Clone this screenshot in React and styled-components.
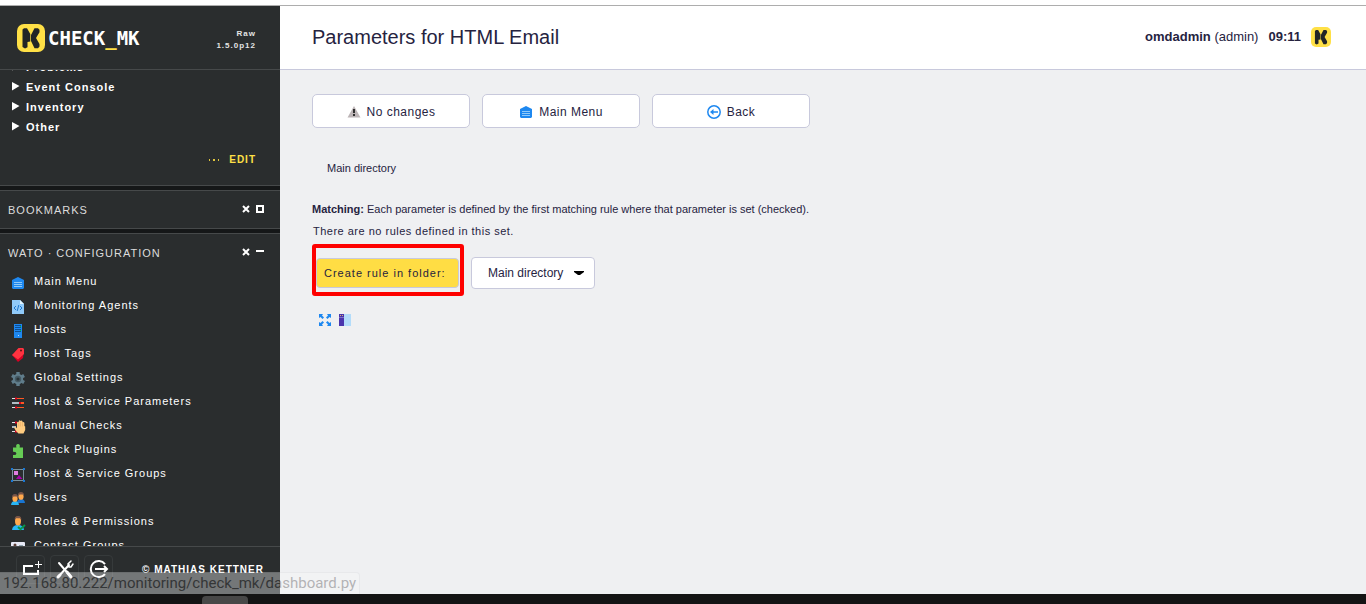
import React from "react";
import styled, { createGlobalStyle } from "styled-components";

const GlobalStyle = createGlobalStyle`
  *, *::before, *::after { box-sizing: border-box; }
  body {
    margin: 0;
    font-family: "Liberation Sans", Arial, sans-serif;
    font-size: 11px;
    line-height: 16px;
    color: #26233f;
  }
  h1, h2, p, ul { margin: 0; padding: 0; font-weight: normal; }
  button, select { font: inherit; color: inherit; margin: 0; }
  a { color: inherit; text-decoration: none; }
  svg { display: block; flex: none; }
`;

const Screen = styled.div`
  display: flex;
  flex-direction: column;
  height: 100vh;
  background: #eff0f2;
`;

const WindowEdge = styled.div`
  flex: none;
  height: 6px;
  background: #fff;
  border-bottom: 1px solid #adadad;
`;

const Workspace = styled.div`
  display: flex;
  flex: 1;
  min-height: 0;
  position: relative;
`;

const Sidebar = styled.aside`
  display: flex;
  flex-direction: column;
  flex: none;
  width: 280px;
  background: #2a2d2e;
  color: #fff;
  letter-spacing: 1px;
`;

const SideHeader = styled.div`
  display: flex;
  align-items: center;
  justify-content: space-between;
  flex: none;
  height: 64px;
  padding: 0 24px 0 17px;
  border-bottom: 1px solid #46494a;
`;

const Brand = styled.a`
  display: flex;
  align-items: center;
  gap: 3px;
  font: bold 19px/28px "DejaVu Sans Mono", monospace;
  letter-spacing: normal;
`;

const Accent = styled.span`
  color: #ffe046;
`;

const Version = styled.div`
  font-size: 8px;
  font-weight: bold;
  line-height: 12px;
  text-align: right;
  padding-top: 4px;
  color: #e4e4e4;
`;

const SideScroll = styled.div`
  flex: 1;
  min-height: 0;
  overflow: hidden;
  background: #151718;
`;

const Snapin = styled.section`
  background: #2a2d2e;
  border-bottom: 1px solid #46494a;
  & + & {
    margin-top: 4px;
    border-top: 1px solid #46494a;
  }
`;

const TreeList = styled.ul`
  list-style: none;
  margin-top: -13px;
  padding-left: 11px;
`;

const TreeItem = styled.li`
  display: flex;
  align-items: center;
  gap: 6px;
  height: 20px;
  font-weight: bold;
`;

const EditRow = styled.div`
  display: flex;
  justify-content: flex-end;
  padding: 15px 24px 17px 0;
`;

const EditLink = styled.a`
  display: flex;
  align-items: center;
  gap: 8px;
  font-size: 10px;
  font-weight: bold;
  color: #ffe046;
`;

const SnapinHead = styled.div`
  display: flex;
  align-items: center;
  justify-content: space-between;
  height: 37px;
  padding: 0 16px 0 8px;
  color: #dcdcdc;
`;

const SnapinTitle = styled.h2`
  font-size: 11px;
`;

const SnapinTools = styled.div`
  display: flex;
  gap: 6px;
  padding-bottom: 2px;
`;

const ToolButton = styled.button`
  padding: 0;
  border: 0;
  background: none;
`;

const MenuList = styled.ul`
  list-style: none;
  padding-left: 10px;
  margin-top: -2px;
`;

const MenuItem = styled.li`
  display: flex;
  align-items: center;
  gap: 8px;
  height: 24px;
  svg { margin-top: 4px; }
`;

const SideFooter = styled.div`
  display: flex;
  align-items: flex-start;
  gap: 5px;
  flex: none;
  height: 48px;
  padding: 8px 16px 0 16px;
  border-top: 1px solid #46494a;
`;

const FootButton = styled.button`
  display: grid;
  place-items: center;
  width: 29px;
  height: 29px;
  padding: 0;
  border: 1px solid #363a3b;
  border-radius: 4px;
  background: none;
`;

const Copyright = styled.a`
  margin-left: auto;
  padding-top: 7px;
  font-size: 10px;
  font-weight: bold;
`;

const Page = styled.div`
  flex: 1;
  min-width: 0;
`;

const PageHeader = styled.header`
  display: flex;
  align-items: center;
  justify-content: space-between;
  height: 64px;
  padding: 0 35px 2px 32px;
  background: #fff;
  border-bottom: 1px solid #c8c9dc;
`;

const Title = styled.h1`
  font-size: 20px;
  line-height: 24px;
`;

const UserInfo = styled.div`
  display: flex;
  align-items: center;
  gap: 10px;
  font-size: 13px;
`;

const Content = styled.main`
  padding: 24px 32px;
`;

const Toolbar = styled.nav`
  display: flex;
  gap: 12px;
`;

const ContextButton = styled.button`
  display: flex;
  align-items: center;
  justify-content: center;
  gap: 6px;
  width: 158px;
  height: 34px;
  padding: 2px 0 0;
  border: 1px solid #c8c9dc;
  border-radius: 5px;
  background: #fff;
  font-size: 12px;
  letter-spacing: 0.04em;
`;

const Crumb = styled.p`
  margin-top: 32px;
  padding-left: 15px;
`;

const Explanation = styled.p`
  margin-top: 25px;
`;

const EmptyNote = styled.p`
  margin-top: 6px;
  padding-left: 1px;
  letter-spacing: 0.045em;
`;

const CreateForm = styled.form`
  display: flex;
  align-items: flex-start;
  gap: 7px;
  margin-top: 5px;
`;

const Highlight = styled.div`
  padding: 10px 1px 4px 0;
  border: 4px solid #fe0000;
  border-radius: 3px;
`;

const CreateButton = styled.button`
  display: block;
  width: 143px;
  height: 30px;
  padding: 0 7px;
  border: 1px solid #c8c9dc;
  border-radius: 4px;
  background: #ffdd44;
  text-align: left;
  letter-spacing: 1px;
`;

const SelectBox = styled.div`
  display: grid;
  align-items: center;
  width: 124px;
  margin-top: 13px;
  & > * { grid-area: 1 / 1; }
  svg { justify-self: end; margin-right: 10px; pointer-events: none; }
`;

const FolderSelect = styled.select`
  appearance: none;
  width: 100%;
  height: 32px;
  padding: 0 16px;
  border: 1px solid #c8c9dc;
  border-radius: 4px;
  background: #fff;
  font-size: 12px;
`;

const PageTools = styled.div`
  display: flex;
  gap: 8px;
  margin-top: 18px;
  padding-left: 7px;
`;

const LinkPreview = styled.div`
  position: absolute;
  left: 0;
  bottom: 0;
  height: 22px;
  padding: 0 3px;
  border: 1px solid #dcdee0;
  border-left: 0;
  border-bottom: 0;
  border-radius: 0 4px 0 0;
  background: #f8f9fa;
  color: #484848;
  font: 15px/20px Roboto, sans-serif;
  opacity: 0.36;
`;

const Dock = styled.div`
  flex: none;
  height: 10px;
  padding: 2px 0 0 202px;
  background: #141414;
`;

const DockTab = styled.div`
  width: 46px;
  height: 8px;
  border-radius: 4px 4px 0 0;
  background: #484848;
`;

const Mark = ({ size }) => (
  <svg width={size} height={size} viewBox="0 0 28 28" aria-hidden="true">
    <rect width="28" height="28" rx="7" fill="#ffe046" />
    <path
      fill="#222526"
      d="M5.500 5.500L7 4.200h3L13.300 10v7.500L10.500 18v5.200L8 24.500l-2.500-1.500z"
    />
    <path
      fill="#222526"
      d="M17.500 4.200h3.500l1.500 1.500v2.500L19 14l3.500 6v2.500L21 24.200h-3.500L14 17v-6z"
    />
  </svg>
);

const Home = ({ size = 16 }) => (
  <svg width={size} height={size} viewBox={size === 16 ? "0 0 16 16" : "1 1 14 14"} aria-hidden="true">
    <path fill="#1e88f0" d="M8 2l6 3v8l-1 1H3l-1-1V5z" />
    <path stroke="#90caf9" d="M4 7.5h8M4 9.5h8M4 11.5h8" />
  </svg>
);

const Person = ({ x, y, shirt }) => (
  <g transform={`translate(${x} ${y})`}>
    <path fill={shirt} d="M-4 8q.4-4 4-4t4 4z" />
    <ellipse cy="1.400" rx="2.600" ry="3.400" fill="#ffa94d" />
    <path fill="#795548" d="M-3 1q-.3-4 3-4t3 4L1.600-.600h-3z" />
  </g>
);

const art = {
  agents: (
    <>
      <path fill="#90caf9" d="M2 1h8l4 4v10H2z" />
      <path fill="#e1f5fe" d="M10 1l4 4h-4z" />
      <path fill="none" stroke="#1e78d0" d="M6 7L4 9l2 2M10 7l2 2-2 2M8.800 6l-1.600 6" />
    </>
  ),
  hosts: (
    <>
      <path fill="#1e88f0" d="M4 1h8v14H4z" />
      <path stroke="#0d4f96" d="M5 2.500h6M5 4.500h6M5 6.500h6M5 8.500h6" />
      <path fill="#00c853" d="M10 3h1v1h-1zM10 7h1v1h-1z" />
      <path fill="#bbdefb" d="M8 12h1v1H8z" />
    </>
  ),
  tags: (
    <>
      <path fill="#d50024" d="M2 8l6 7 5-4 1-8z" />
      <path fill="#ff3340" d="M8.500 1H13l1 1v5l-6 5.500L2 8z" />
      <circle cx="11" cy="3.500" r="1" fill="#5a1515" />
    </>
  ),
  gear: (
    <>
      <path stroke="#607d8b" strokeWidth="3.400" d="M8 1v14M1.900 4.500l12.200 7M1.900 11.500l12.200-7" />
      <circle cx="8" cy="8" r="5.200" fill="#607d8b" />
      <circle cx="8" cy="8" r="3.200" fill="#455a64" />
      <circle cx="8" cy="8" r="1.600" fill="#2a3438" />
    </>
  ),
  params: (
    <>
      <path stroke="#ff5722" d="M2 3.500h12M2 12.500h12" />
      <path stroke="#e0e0e0" d="M2 3.500h3M2 12.500h3" />
      <path stroke="#b0bec5" strokeWidth="2" d="M2 8h8" />
      <path stroke="#ff5722" strokeWidth="2" d="M11 8h3" />
      <path stroke="#e00020" strokeWidth="2" d="M5 3.500h2M9 8h2M5 12.500h2" />
    </>
  ),
  manual: (
    <>
      <path stroke="#e0e0e0" d="M2 3.500h3M2 12.500h3" />
      <path stroke="#b0bec5" strokeWidth="2" d="M2 8h4" />
      <path stroke="#e00020" strokeWidth="2" d="M5 3.500h2M5 12.500h2" />
      <path
        fill="#ffcc80"
        d="M7 8V3.500q.8-1.500 1.700-.3V2q1-1.400 1.900 0 1-1.300 1.900.3v1q1-.9 1.900.4V7l.8.5V11l-1.700 3.500H8.500L6 12 4 8.500q1.200-1.500 3 .8z"
      />
      <path stroke="#e8a45c" strokeWidth=".5" d="M8.700 3.500v4M10.600 3v4.500M12.500 3.500v4" />
    </>
  ),
  plugin: (
    <path
      fill="#66cc55"
      d="M3 4.500h3.400Q5.400 1 8 1t1.600 3.500H13V15H3v-3q3.400.4 3.400-1.600T3 8.700z"
    />
  ),
  groups: (
    <>
      <path fill="none" stroke="#78909c" d="M2.500 2.500h11v11h-11z" />
      <path fill="#1976d2" d="M1 1h2v2H1zM13 1h2v2h-2zM1 13h2v2H1zM13 13h2v2h-2z" />
      <path fill="#e07ee0" d="M4 4h4v4H4z" />
      <path fill="#aa00aa" d="M6 12l3-4 3.500 4z" />
    </>
  ),
  users: (
    <>
      <Person x={11} y={4} shirt="#1976d2" />
      <Person x={5} y={6} shirt="#29b6f6" />
    </>
  ),
  roles: (
    <>
      <path fill="#29b6f6" d="M2 15q.5-5 6-5t6 5z" />
      <ellipse cx="8" cy="6" rx="3" ry="4.500" fill="#ffa94d" />
      <path fill="#795548" d="M4.700 5q-.4-4 3.300-4t3.300 4L10 3.200H6z" />
      <path fill="none" stroke="#0a9648" strokeWidth="2" d="M8 12l2.500 2.200L15 10" />
    </>
  ),
  contact: (
    <>
      <rect x="1" y="3" width="14" height="11" rx="1" fill="#e8eaf6" />
      <circle cx="5" cy="6" r="1.500" fill="#5d4037" />
      <path stroke="#90a4ae" d="M9 6.500h4M9 9.500h4" />
    </>
  ),
};

const Icon = ({ name }) =>
  name === "home" ? (
    <Home />
  ) : (
    <svg width="16" height="16" viewBox="0 0 16 16" aria-hidden="true">{art[name]}</svg>
  );

const views = ["Problems", "Event Console", "Inventory", "Other"];

const menu = [
  ["home", "Main Menu"],
  ["agents", "Monitoring Agents"],
  ["hosts", "Hosts"],
  ["tags", "Host Tags"],
  ["gear", "Global Settings"],
  ["params", "Host & Service Parameters"],
  ["manual", "Manual Checks"],
  ["plugin", "Check Plugins"],
  ["groups", "Host & Service Groups"],
  ["users", "Users"],
  ["roles", "Roles & Permissions"],
  ["contact", "Contact Groups"],
];

const SnapinBar = ({ title, open }) => (
  <SnapinHead>
    <SnapinTitle>{title}</SnapinTitle>
    <SnapinTools>
      <ToolButton aria-label="Close">
        <svg width="8" height="8" viewBox="0 0 8 8">
          <path stroke="#fff" strokeWidth="2" d="M1 1l6 6M7 1L1 7" />
        </svg>
      </ToolButton>
      <ToolButton aria-label={open ? "Collapse" : "Expand"}>
        <svg width="8" height="8" viewBox="0 0 8 8">
          {open ? (
            <path fill="#fff" d="M0 2h8v2H0z" />
          ) : (
            <path fill="none" stroke="#fff" strokeWidth="2" d="M1 1h6v6H1z" />
          )}
        </svg>
      </ToolButton>
    </SnapinTools>
  </SnapinHead>
);

export default function App() {
  return (
    <Screen>
      <GlobalStyle />
      <WindowEdge />
      <Workspace>
        <Sidebar>
          <SideHeader>
            <Brand href="#">
              <Mark size={28} />
              <span>CHECK<Accent>_</Accent>MK</span>
            </Brand>
            <Version>Raw<br />1.5.0p12</Version>
          </SideHeader>
          <SideScroll>
            <Snapin>
              <TreeList>
                {views.map((label) => (
                  <TreeItem key={label}>
                    <svg width="9" height="12" viewBox="0 0 9 12" aria-hidden="true">
                      <path fill="#fff" d="M1 1l7.500 4L1 9.500z" />
                    </svg>
                    {label}
                  </TreeItem>
                ))}
              </TreeList>
              <EditRow>
                <EditLink href="#">
                  <svg width="13" height="2" viewBox="0 0 13 2" aria-hidden="true">
                    <path fill="#e0c63e" d="M1 0h1v2H1zM5 0h2v2H5zM10 0h1v2h-1z" />
                  </svg>
                  EDIT
                </EditLink>
              </EditRow>
            </Snapin>
            <Snapin>
              <SnapinBar title="BOOKMARKS" />
            </Snapin>
            <Snapin>
              <SnapinBar title="WATO · CONFIGURATION" open />
              <MenuList>
                {menu.map(([icon, label]) => (
                  <MenuItem key={label}>
                    <Icon name={icon} />
                    <a href="#">{label}</a>
                  </MenuItem>
                ))}
              </MenuList>
            </Snapin>
          </SideScroll>
          <SideFooter>
            <FootButton aria-label="Add snapin">
              <svg width="23" height="23" viewBox="0 0 23 23" fill="none" stroke="#fff">
                <path strokeWidth="2" d="M14 8H5v8h14v-4" />
                <path d="M19.500 3v7M16 6.500h7" />
              </svg>
            </FootButton>
            <FootButton aria-label="Edit profile">
              <svg width="23" height="23" viewBox="0 0 23 23" fill="none" stroke="#fff" strokeLinecap="round">
                <path strokeWidth="2" d="M6 5l12 14M5 19L16 7" />
                <path strokeWidth="3" d="M14 14l4 5M5 19l2-2" />
                <path strokeWidth="1.500" d="M18 3l-3 3 1 3h2l2-3" />
              </svg>
            </FootButton>
            <FootButton aria-label="Log out">
              <svg width="23" height="23" viewBox="0 0 23 23" fill="none" stroke="#fff">
                <path strokeWidth="2" d="M18 6a8 8 0 1 0 0 10M8 11h12" />
                <path strokeWidth="2" d="M17 8l3 3-3 3" />
              </svg>
            </FootButton>
            <Copyright href="#">© MATHIAS KETTNER</Copyright>
          </SideFooter>
        </Sidebar>
        <Page>
          <PageHeader>
            <Title>Parameters for HTML Email</Title>
            <UserInfo>
              <span><b>omdadmin</b> (admin)</span>
              <b>09:11</b>
              <Mark size={20} />
            </UserInfo>
          </PageHeader>
          <Content>
            <Toolbar>
              <ContextButton>
                <svg width="14" height="14" viewBox="0 0 14 14" aria-hidden="true">
                  <path fill="#bcb4b6" d="M7 1l6.500 11.500H.5z" />
                  <path stroke="#2f2f2f" strokeWidth="2" d="M7 4v4M7 9v2" />
                </svg>
                No changes
              </ContextButton>
              <ContextButton>
                <Home size={14} />
                Main Menu
              </ContextButton>
              <ContextButton>
                <svg width="14" height="14" viewBox="0 0 14 14" fill="none" stroke="#1e88f0" aria-hidden="true">
                  <circle cx="7" cy="7" r="6.200" strokeWidth="1.500" />
                  <path strokeWidth="1.500" d="M11 7H5" />
                  <path fill="#1e88f0" stroke="none" d="M3 7l3.500-3v6z" />
                </svg>
                Back
              </ContextButton>
            </Toolbar>
            <Crumb><a href="#">Main directory</a></Crumb>
            <Explanation>
              <b>Matching:</b> Each parameter is defined by the first matching rule where that parameter is set (checked).
            </Explanation>
            <EmptyNote>There are no rules defined in this set.</EmptyNote>
            <CreateForm onSubmit={(e) => e.preventDefault()}>
              <Highlight>
                <CreateButton type="submit">Create rule in folder:</CreateButton>
              </Highlight>
              <SelectBox>
                <FolderSelect aria-label="Folder">
                  <option>Main directory</option>
                </FolderSelect>
                <svg width="12" height="4" viewBox="0 0 12 4" aria-hidden="true">
                  <path d="M1 0h10v1L7 4H5L1 1z" />
                </svg>
              </SelectBox>
            </CreateForm>
            <PageTools>
              <ToolButton aria-label="Full screen">
                <svg width="12" height="12" viewBox="0 0 12 12" fill="#1e88f0">
                  <path d="M0 0h4L3 1.500 5 3.500 3.500 5 1.500 3 0 4zM12 0v4l-1.500-1-2 2L7 3.500l2-2L8 0zM0 12V8l1.500 1 2-2L5 8.500l-2 2L4 12zM12 12H8l1-1.500-2-2L8.500 7l2 2L12 8z" />
                </svg>
              </ToolButton>
              <ToolButton aria-label="Toggle sidebar">
                <svg width="12" height="12" viewBox="0 0 12 12">
                  <path fill="#b3dcfa" d="M5 0h7v12H5z" />
                  <path fill="#4a35ad" d="M0 0h5v12H0z" />
                  <path fill="#7e6fc8" d="M0 3h5v1H0z" />
                  <path fill="#d8b070" d="M1 1h1v1H1zM3 1h1v1H3z" />
                </svg>
              </ToolButton>
            </PageTools>
          </Content>
        </Page>
        <LinkPreview>192.168.80.222/monitoring/check_mk/dashboard.py</LinkPreview>
      </Workspace>
      <Dock>
        <DockTab />
      </Dock>
    </Screen>
  );
}
